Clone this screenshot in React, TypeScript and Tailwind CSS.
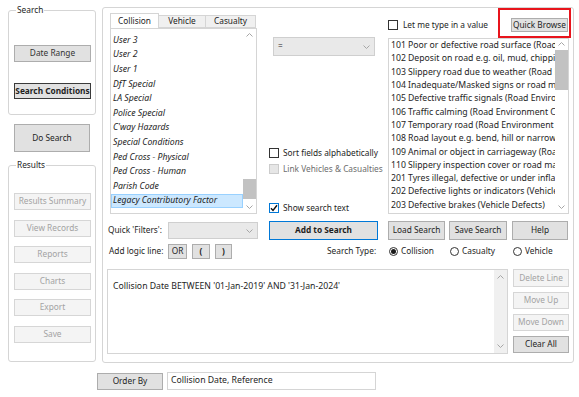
import React from "react";

type BtnKind = "normal" | "disabled" | "default" | "active";

const BTN: Record<BtnKind, string> = {
  normal: "bg-[#e1e1e1] border-[#adadad] text-[#1e1e1e]",
  disabled: "bg-[#f4f4f4] border-[#d6d6d6] text-[#a3a3a3]",
  default: "bg-[#e1e1e1] border-[#0078d7] text-[#1e1e1e] font-bold",
  active: "bg-[#e1e1e1] border-[#3a3a3a] text-[#1e1e1e] font-bold",
};

function Btn({ label, kind = "normal", className = "" }: { label: string; kind?: BtnKind; className?: string }) {
  return (
    <div
      className={`flex items-center justify-center overflow-hidden whitespace-nowrap border text-[8.3px] leading-none ${BTN[kind]} ${className}`}
    >
      {label}
    </div>
  );
}

function Chevron({ up = false }: { up?: boolean }) {
  return (
    <svg width="7" height="4" viewBox="0 0 7 4" className="block">
      <polyline
        points={up ? "0.5,3.5 3.5,0.5 6.5,3.5" : "0.5,0.5 3.5,3.5 6.5,0.5"}
        fill="none"
        stroke="#a6a6a6"
        strokeWidth="1"
      />
    </svg>
  );
}

function CheckBox({ checked = false, disabled = false }: { checked?: boolean; disabled?: boolean }) {
  const cls = disabled
    ? "bg-[#e6e6e6] border-[#cccccc]"
    : checked
      ? "bg-white border-[#0078d7]"
      : "bg-white border-[#333333]";
  return (
    <div className={`w-[10px] h-[10px] border shrink-0 flex items-center justify-center ${cls}`}>
      {checked && (
        <svg width="8" height="8" viewBox="0 0 8 8">
          <polyline points="1,4.2 3,6.4 7,1.2" fill="none" stroke="#111" strokeWidth="1.4" />
        </svg>
      )}
    </div>
  );
}

function Radio({ checked = false, label, className = "" }: { checked?: boolean; label: string; className?: string }) {
  return (
    <div className={`flex items-center gap-[3px] ${className}`}>
      <div className="w-[9px] h-[9px] rounded-full border border-[#333333] flex items-center justify-center shrink-0">
        {checked && <div className="w-[5px] h-[5px] rounded-full bg-[#1a1a1a]" />}
      </div>
      <span>{label}</span>
    </div>
  );
}

const FIELDS = [
  "User 3",
  "User 2",
  "User 1",
  "DfT Special",
  "LA Special",
  "Police Special",
  "C'way Hazards",
  "Special Conditions",
  "Ped Cross - Physical",
  "Ped Cross - Human",
  "Parish Code",
  "Legacy Contributory Factor",
];

const VALUES: [string, string][] = [
  ["101", "Poor or defective road surface (Road Environment Contributed)"],
  ["102", "Deposit on road e.g. oil, mud, chippings (Road Environment Contributed)"],
  ["103", "Slippery road due to weather (Road Environment Contributed)"],
  ["104", "Inadequate/Masked signs or road markings (Road Environment Contributed)"],
  ["105", "Defective traffic signals (Road Environment Contributed)"],
  ["106", "Traffic calming (Road Environment Contributed)"],
  ["107", "Temporary road (Road Environment Contributed)"],
  ["108", "Road layout e.g. bend, hill or narrow carriageway (Road Environment Contributed)"],
  ["109", "Animal or object in carriageway (Road Environment Contributed)"],
  ["110", "Slippery inspection cover or road marking (Road Environment Contributed)"],
  ["201", "Tyres illegal, defective or under inflated (Vehicle Defects)"],
  ["202", "Defective lights or indicators (Vehicle Defects)"],
  ["203", "Defective brakes (Vehicle Defects)"],
  ["204", "Defective steering or suspension (Vehicle Defects)"],
];

function LeftColumn() {
  return (
    <div className="w-[88px] ml-[8px] flex flex-col shrink-0">
      <fieldset className="mt-[4px] h-[111px] border border-[#d5d5d5] rounded-[3px] pl-[5px]">
        <legend className="ml-[2px] px-[1px] text-[8.3px] leading-[12px]">Search</legend>
        <Btn label="Date Range" className="mt-[29px] w-[77px] h-[17px] text-[#333]" />
        <Btn label="Search Conditions" kind="active" className="mt-[21px] w-[77px] h-[16px]" />
      </fieldset>

      <Btn label="Do Search" className="mt-[9px] ml-[6px] w-[76px] h-[28px]" />

      <fieldset className="mt-[7px] h-[203px] border border-[#d5d5d5] rounded-[3px] pl-[5px]">
        <legend className="ml-[2px] px-[1px] text-[8.3px] leading-[12px]">Results</legend>
        <div className="mt-[22px] flex flex-col gap-[9.5px]">
          {["Results Summary", "View Records", "Reports", "Charts", "Export", "Save"].map((l) => (
            <Btn key={l} label={l} kind="disabled" className="w-[77px] h-[17px]" />
          ))}
        </div>
      </fieldset>
    </div>
  );
}

function FieldList() {
  return (
    <div className="w-[147px] flex flex-col">
      {/* tabs */}
      <div className="h-[15px] flex items-end text-[8.3px] leading-none">
        <div className="w-[49px] h-[15px] border border-b-0 border-[#d5d5d5] bg-white flex items-center justify-center">
          Collision
        </div>
        <div className="w-[47px] h-[13px] border border-l-0 border-[#d5d5d5] bg-[#f0f0f0] flex items-center justify-center">
          Vehicle
        </div>
        <div className="w-[50px] h-[13px] border border-l-0 border-[#d5d5d5] bg-[#f0f0f0] flex items-center justify-center">
          Casualty
        </div>
      </div>
      {/* list */}
      <div className="w-[147px] h-[186px] border border-[#d5d5d5] bg-white flex overflow-hidden">
        <div className="flex-1 min-w-0 pt-[4px] flex flex-col">
          {FIELDS.map((f, i) => {
            const sel = i === FIELDS.length - 1;
            return (
              <div
                key={f}
                className={`h-[14.6px] shrink-0 flex items-center italic text-[8.7px] whitespace-nowrap overflow-hidden ${
                  sel ? "bg-[#cce8ff] border border-[#99d1ff] pl-[1px]" : "pl-[2px]"
                }`}
              >
                {f}
              </div>
            );
          })}
        </div>
        <div className="w-[13px] flex flex-col items-center bg-white">
          <div className="h-[12px] flex items-center justify-center">
            <Chevron up />
          </div>
          <div className="flex-1 w-full flex flex-col">
            <div className="mt-[138px] h-[20px] w-full bg-[#c2c2c2]" />
          </div>
          <div className="h-[12px] flex items-center justify-center">
            <Chevron />
          </div>
        </div>
      </div>
    </div>
  );
}

function OperatorColumn() {
  return (
    <div className="w-[109px] ml-[12px] flex flex-col text-[8.3px]">
      <div className="mt-[24px] ml-[4px] w-[102px] h-[19px] border border-[#cfcfcf] bg-[#e9e9e9] flex items-center justify-between px-[4px]">
        <span>=</span>
        <Chevron />
      </div>
      <div className="mt-[92px] h-[10px] flex items-center gap-[4px] whitespace-nowrap">
        <CheckBox />
        <span>Sort fields alphabetically</span>
      </div>
      <div className="mt-[6px] h-[10px] flex items-center gap-[4px] whitespace-nowrap text-[#6d6d6d]">
        <CheckBox disabled />
        <span>Link Vehicles &amp; Casualties</span>
      </div>
      <div className="mt-[29px] h-[10px] flex items-center gap-[4px] whitespace-nowrap">
        <CheckBox checked />
        <span>Show search text</span>
      </div>
    </div>
  );
}

function ValueColumn() {
  return (
    <div className="w-[181px] ml-[10px] flex flex-col text-[8.3px]">
      <div className="mt-[5px] h-[14px] flex items-center">
        <CheckBox />
        <span className="ml-[5px] whitespace-nowrap">Let me type in a value</span>
        <div className="relative ml-auto mr-[1px]">
          <Btn label="Quick Browse" className="w-[57px] h-[14px]" />
          <div className="absolute -left-[13px] -right-[3px] -top-[10px] -bottom-[6px] border-2 border-[#e8141c] pointer-events-none" />
        </div>
      </div>
      <div className="mt-[6px] h-[176px] border border-[#d5d5d5] bg-white flex overflow-hidden">
        <div className="flex-1 min-w-0 flex flex-col pl-[2px] overflow-hidden">
          {VALUES.map(([code, text]) => (
            <div key={code} className="h-[13.3px] shrink-0 flex items-center whitespace-nowrap overflow-hidden text-[8.7px]">
              <span className="w-[17px] shrink-0">{code}</span>
              <span>{text}</span>
            </div>
          ))}
        </div>
        <div className="w-[13px] flex flex-col items-center">
          <div className="h-[10px] flex items-center justify-center">
            <Chevron up />
          </div>
          <div className="flex-1 w-full flex flex-col">
            <div className="mt-[1px] h-[40px] w-full bg-[#c2c2c2]" />
          </div>
          <div className="h-[12px] flex items-center justify-center">
            <Chevron />
          </div>
        </div>
      </div>
    </div>
  );
}

function MainPanel() {
  return (
    <div className="ml-[6px] mt-[7px] w-[472px] h-[356px] border border-[#d5d5d5] rounded-[3px] flex flex-col">
      {/* field / operator / value */}
      <div className="mt-[5px] ml-[7px] flex items-start">
        <FieldList />
        <OperatorColumn />
        <ValueColumn />
      </div>

      {/* quick filters + actions */}
      <div className="mt-[7px] ml-[5px] flex items-center text-[8.3px]">
        <span className="w-[60px] whitespace-nowrap">Quick 'Filters':</span>
        <div className="w-[90px] h-[17px] border border-[#cfcfcf] bg-[#e9e9e9] flex items-center justify-end pr-[4px]">
          <Chevron />
        </div>
        <Btn label="Add to Search" kind="default" className="ml-[11px] w-[109px] h-[19px]" />
        <Btn label="Load Search" className="ml-[10px] w-[57px] h-[19px]" />
        <Btn label="Save Search" className="ml-[4px] w-[58px] h-[19px]" />
        <Btn label="Help" className="ml-[5px] w-[56px] h-[19px]" />
      </div>

      {/* logic line + search type */}
      <div className="mt-[4px] ml-[6px] h-[15px] flex items-center text-[8.3px]">
        <span className="w-[59px] whitespace-nowrap">Add logic line:</span>
        <Btn label="OR" className="w-[19px] h-[15px]" />
        <Btn label="(" className="ml-[5px] w-[18px] h-[15px] font-bold" />
        <Btn label=")" className="ml-[5px] w-[17px] h-[15px] font-bold" />
        <span className="ml-[95px] w-[62px] whitespace-nowrap">Search Type:</span>
        <Radio checked label="Collision" className="w-[61px]" />
        <Radio label="Casualty" className="w-[63px]" />
        <Radio label="Vehicle" />
      </div>

      {/* search text + line buttons */}
      <div className="mt-[10px] ml-[4px] flex items-start">
        <div className="w-[401px] h-[85px] border border-[#d5d5d5] bg-white flex">
          <div className="flex-1 pl-[5px] pt-[12px] text-[8.7px] leading-none whitespace-nowrap">
            Collision Date BETWEEN '01-Jan-2019' AND '31-Jan-2024'
          </div>
          <div className="w-[13px] bg-[#f0f0f0] flex flex-col items-center justify-between py-[5px]">
            <Chevron up />
            <Chevron />
          </div>
        </div>
        <div className="ml-[5px] w-[56px] flex flex-col gap-[5px]">
          <Btn label="Delete Line" kind="disabled" className="h-[18px]" />
          <Btn label="Move Up" kind="disabled" className="h-[17px]" />
          <Btn label="Move Down" kind="disabled" className="h-[17px]" />
          <Btn label="Clear All" className="h-[17px] bg-[#dadada]" />
        </div>
      </div>
    </div>
  );
}

export default function App() {
  return (
    <div className="w-[579px] h-[397px] bg-white overflow-hidden flex flex-col text-[#1e1e1e] font-['Noto_Sans','Open_Sans',sans-serif]">
      <div className="flex items-start h-[363px]">
        <LeftColumn />
        <MainPanel />
      </div>
      <div className="mt-[9px] ml-[97px] flex items-center text-[8.3px]">
        <Btn label="Order By" className="w-[66px] h-[17px]" />
        <div className="ml-[4px] w-[209px] h-[18px] border border-[#d5d5d5] bg-white flex items-center pl-[3px] text-[8.7px]">
          Collision Date, Reference
        </div>
      </div>
    </div>
  );
}
